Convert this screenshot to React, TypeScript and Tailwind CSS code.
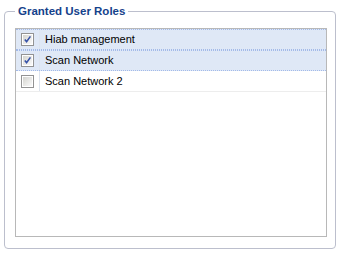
import React from "react";

const roles = [
  { name: "Hiab management", checked: true },
  { name: "Scan Network", checked: true },
  { name: "Scan Network 2", checked: false },
];

const Check = ({ checked }: { checked: boolean }) => (
  <svg width="13" height="13" viewBox="0 0 13 13">
    <defs>
      <linearGradient id="cbg" x1="0" y1="0" x2="1" y2="1">
        <stop offset="0" stopColor="#d4d4cf" />
        <stop offset="1" stopColor="#fafafa" />
      </linearGradient>
    </defs>
    <rect x="0.5" y="0.5" width="12" height="12" fill="#ffffff" stroke="#939393" />
    <rect x="2" y="2" width="9" height="9" fill="url(#cbg)" />
    {checked && (
      <path d="M3.8 6.4 L5.6 8.6 L9.4 3.4" fill="none" stroke="#3652a8" strokeWidth="1.6" />
    )}
  </svg>
);

export default function App() {
  return (
    <div className="w-[342px] h-[253px] bg-white pt-[3px] pl-[4px] font-['Liberation_Sans',Arial,sans-serif]">
      <fieldset className="w-[332px] border border-[#bcbfcd] rounded-[4px] pl-[10px] pb-[11px]">
        <legend className="px-[3px] leading-[16px] text-[11.5px] font-bold text-[#15428b]">
          Granted User Roles
        </legend>
        <div className="mt-[9px] w-[312px] h-[209px] border border-[#b8b8b8] bg-white">
          {roles.map((r) => (
            <div
              key={r.name}
              className={
                r.checked
                  ? "flex h-[21px] bg-[#dfe8f6] border-y border-dotted border-[#a3bae9]"
                  : "flex h-[21px] border-b border-[#ededed]"
              }
            >
              <div className="w-[24px] flex items-center justify-center border-r border-[#dde4ee]">
                <Check checked={r.checked} />
              </div>
              <div className="flex items-center pl-[5px] text-[11px] text-black">{r.name}</div>
            </div>
          ))}
        </div>
      </fieldset>
    </div>
  );
}
